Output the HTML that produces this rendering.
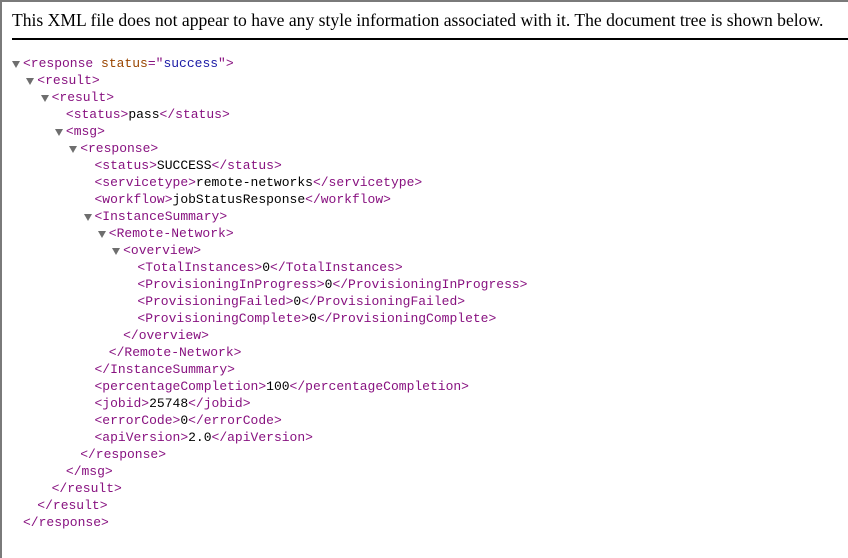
<!DOCTYPE html>
<html><head><style>
body{margin:0;width:848px;height:558px;overflow:hidden;background:#fff;position:relative;border-top:2px solid #7a7a7a;border-left:2px solid #7a7a7a;box-sizing:border-box}
.h{position:absolute;left:10px;top:8px;font:17.6px "Liberation Serif",serif;color:#000;white-space:nowrap}
.hr{position:absolute;left:10px;right:0;top:36px;height:2px;background:#000}
.l{position:absolute;font:13px/17px "Liberation Mono",monospace;white-space:pre;color:#000}
.t{color:#881280}.a{color:#994500}.v{color:#1a1aa6}
.ar{position:absolute;width:0;height:0;border-left:4px solid transparent;border-right:4px solid transparent;border-top:7px solid #6e6e6e}
</style></head><body>
<div class="h">This XML file does not appear to have any style information associated with it. The document tree is shown below.</div>
<div class="hr"></div>
<div id="c"></div>
<script>
var L=[
[0,1,'<span class="t">&lt;response </span><span class="a">status</span><span class="t">="</span><span class="v">success</span><span class="t">"&gt;</span>'],
[1,1,'<span class="t">&lt;result&gt;</span>'],
[2,1,'<span class="t">&lt;result&gt;</span>'],
[3,0,'<span class="t">&lt;status&gt;</span>pass<span class="t">&lt;/status&gt;</span>'],
[3,1,'<span class="t">&lt;msg&gt;</span>'],
[4,1,'<span class="t">&lt;response&gt;</span>'],
[5,0,'<span class="t">&lt;status&gt;</span>SUCCESS<span class="t">&lt;/status&gt;</span>'],
[5,0,'<span class="t">&lt;servicetype&gt;</span>remote-networks<span class="t">&lt;/servicetype&gt;</span>'],
[5,0,'<span class="t">&lt;workflow&gt;</span>jobStatusResponse<span class="t">&lt;/workflow&gt;</span>'],
[5,1,'<span class="t">&lt;InstanceSummary&gt;</span>'],
[6,1,'<span class="t">&lt;Remote-Network&gt;</span>'],
[7,1,'<span class="t">&lt;overview&gt;</span>'],
[8,0,'<span class="t">&lt;TotalInstances&gt;</span>0<span class="t">&lt;/TotalInstances&gt;</span>'],
[8,0,'<span class="t">&lt;ProvisioningInProgress&gt;</span>0<span class="t">&lt;/ProvisioningInProgress&gt;</span>'],
[8,0,'<span class="t">&lt;ProvisioningFailed&gt;</span>0<span class="t">&lt;/ProvisioningFailed&gt;</span>'],
[8,0,'<span class="t">&lt;ProvisioningComplete&gt;</span>0<span class="t">&lt;/ProvisioningComplete&gt;</span>'],
[7,0,'<span class="t">&lt;/overview&gt;</span>'],
[6,0,'<span class="t">&lt;/Remote-Network&gt;</span>'],
[5,0,'<span class="t">&lt;/InstanceSummary&gt;</span>'],
[5,0,'<span class="t">&lt;percentageCompletion&gt;</span>100<span class="t">&lt;/percentageCompletion&gt;</span>'],
[5,0,'<span class="t">&lt;jobid&gt;</span>25748<span class="t">&lt;/jobid&gt;</span>'],
[5,0,'<span class="t">&lt;errorCode&gt;</span>0<span class="t">&lt;/errorCode&gt;</span>'],
[5,0,'<span class="t">&lt;apiVersion&gt;</span>2.0<span class="t">&lt;/apiVersion&gt;</span>'],
[4,0,'<span class="t">&lt;/response&gt;</span>'],
[3,0,'<span class="t">&lt;/msg&gt;</span>'],
[2,0,'<span class="t">&lt;/result&gt;</span>'],
[1,0,'<span class="t">&lt;/result&gt;</span>'],
[0,0,'<span class="t">&lt;/response&gt;</span>']
];
var h='';
for(var i=0;i<L.length;i++){var x=21+L[i][0]*14.3,y=53+i*17.0;
if(L[i][1])h+='<div class="ar" style="left:'+(x-11)+'px;top:'+(y+6)+'px"></div>';
h+='<div class="l" style="left:'+x+'px;top:'+y+'px">'+L[i][2]+'</div>';}
document.getElementById('c').innerHTML=h;
</script>
</body></html>
